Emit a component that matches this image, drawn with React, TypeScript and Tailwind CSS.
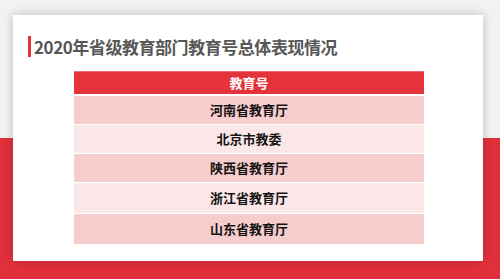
import React from 'react'

const rows: { name: string; bg: string; h: string }[] = [
  { name: '河南省教育厅', bg: 'bg-[#f6cccd]', h: 'h-[28px]' },
  { name: '北京市教委', bg: 'bg-[#fbe7e7]', h: 'h-[28px]' },
  { name: '陕西省教育厅', bg: 'bg-[#f6cccd]', h: 'h-[28px]' },
  { name: '浙江省教育厅', bg: 'bg-[#fbe7e7]', h: 'h-[30px]' },
  { name: '山东省教育厅', bg: 'bg-[#f6cccd]', h: 'h-[30px]' },
]

export default function App() {
  return (
    <div
      className="w-[500px] h-[279px] overflow-hidden bg-[linear-gradient(to_bottom,#f2f2f2_138px,#e1303a_138px)] pt-[15px] pl-[13px]"
      style={{ fontFamily: '"Noto Sans CJK SC", "Noto Sans", sans-serif' }}
    >
      <div className="w-[470px] h-[246px] bg-white shadow-[0_0_10px_rgba(0,0,0,0.22)] pt-[21px] pl-[15px]">
        {/* Title */}
        <div className="flex items-center h-[21px] gap-[3px]">
          <span className="w-[3px] h-[21px] bg-[#e5333b]" />
          <h1 className="text-[17px] leading-none font-bold text-[#575757] tracking-[-0.45px]">
            2020年省级教育部门教育号总体表现情况
          </h1>
        </div>

        {/* Table */}
        <div className="ml-[46px] mt-[14px] w-[350px] flex flex-col">
          <div className="h-[23px] bg-[#e5333b] border-t border-[#ec6d72] flex items-center justify-center text-white text-[13px] font-bold">
            教育号
          </div>
          <div className="flex flex-col gap-px mt-[2px]">
            {rows.map((r) => (
              <div
                key={r.name}
                className={`${r.h} ${r.bg} flex items-center justify-center text-[13px] font-bold text-[#141414]`}
              >
                {r.name}
              </div>
            ))}
          </div>
        </div>
      </div>
    </div>
  )
}
